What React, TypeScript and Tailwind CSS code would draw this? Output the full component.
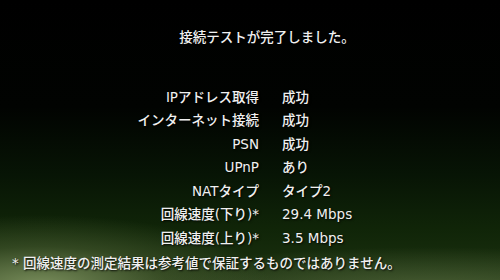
const rows: [string, string][] = [
  ["IPアドレス取得", "成功"],
  ["インターネット接続", "成功"],
  ["PSN", "成功"],
  ["UPnP", "あり"],
  ["NATタイプ", "タイプ2"],
  ["回線速度(下り)*", "29.4 Mbps"],
  ["回線速度(上り)*", "3.5 Mbps"],
];

export default function App() {
  return (
    <div className="w-[500px] h-[280px] overflow-hidden flex flex-col text-[13.5px] leading-[18px] font-medium text-[#f0f0f0] font-['DejaVu_Sans','Noto_Sans_CJK_JP',sans-serif] [text-shadow:1px_1px_2px_rgba(0,0,0,0.9)] bg-[radial-gradient(ellipse_230px_70px_at_40px_285px,rgba(125,145,95,0.95),rgba(80,100,55,0.5)_55%,transparent),radial-gradient(ellipse_320px_45px_at_430px_292px,rgba(95,115,70,0.7),transparent),linear-gradient(to_bottom,#000000_0%,#010301_38%,#071405_62%,#102508_82%,#1c3210_100%)]">
      {/* Title */}
      <div className="pt-[28px] text-center pl-[34px]">接続テストが完了しました。</div>

      {/* Results */}
      <div className="mt-[39.5px] grid grid-cols-[259px_1fr] gap-x-[23px]">
        {rows.map(([label, value]) => (
          <div key={label} className="contents">
            <div className="text-right h-[23.5px] leading-[23.5px]">{label}</div>
            <div className="h-[23.5px] leading-[23.5px]">{value}</div>
          </div>
        ))}
      </div>

      {/* Footnote */}
      <div className="mt-[4px] pl-[12px]">* 回線速度の測定結果は参考値で保証するものではありません。</div>
    </div>
  );
}
